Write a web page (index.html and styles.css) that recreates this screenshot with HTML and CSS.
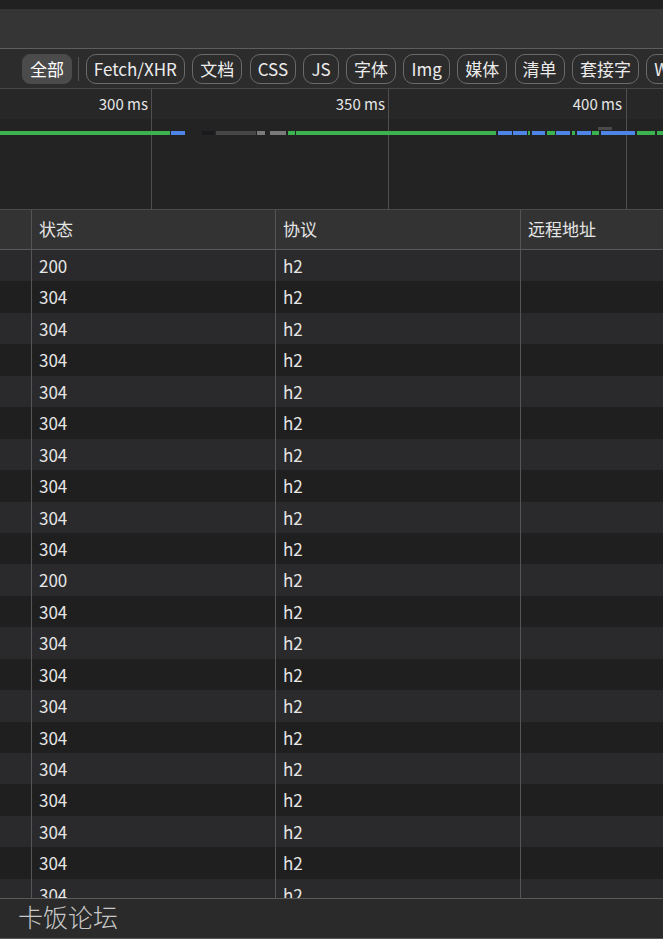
FILE: index.html
```html
<!DOCTYPE html>
<html lang="zh-CN">
<head>
    <meta charset="utf-8" />
    <title>网络</title>
    <link rel="stylesheet" href="styles.css">
</head>
<body>
    <div id="panel">
        <div class="topStrip"></div>
        <div class="toolStrip"></div>

        <!-- 类型过滤 -->
        <div class="filterBar">
            <span class="pill pillOn">全部</span>
            <span class="pillSep"></span>
            <span class="pill">Fetch/XHR</span>
            <span class="pill">文档</span>
            <span class="pill">CSS</span>
            <span class="pill">JS</span>
            <span class="pill">字体</span>
            <span class="pill">Img</span>
            <span class="pill">媒体</span>
            <span class="pill">清单</span>
            <span class="pill">套接字</span>
            <span class="pill">WebAssembly</span>
        </div>

        <!-- 时间轴 -->
        <div class="timeline">
            <div class="ruler"></div>
            <div class="gridLine" style="left: 151px"></div>
            <div class="gridLine" style="left: 388px"></div>
            <div class="gridLine" style="left: 626px"></div>
            <span class="tick" style="right: 515px">300 ms</span>
            <span class="tick" style="right: 278px">350 ms</span>
            <span class="tick" style="right: 41px">400 ms</span>
            <div id="bars"></div>
        </div>

        <div class="table">
            <div class="row head">
                <div class="cell"></div>
                <div class="cell">状态</div>
                <div class="cell">协议</div>
                <div class="cell">远程地址</div>
            </div>
            <div id="rows"></div>
        </div>

        <div class="footer">卡饭论坛</div>
    </div>

    <script type="text/javascript">
        // 时间轴上的分段 [起点, 终点, 类型]
        var segs = [
            [0, 170, "g"], [171, 185, "b"], [202, 214, "k"], [216, 256, "d"], [257, 265, "l"],
            [270, 286, "l"], [288, 295, "g"], [296, 496, "g"], [498, 512, "b"], [513, 527, "b"],
            [528, 530, "g"], [532, 545, "b"], [547, 555, "g"], [556, 570, "b"], [572, 575, "g"],
            [577, 591, "b"], [592, 599, "g"], [601, 635, "b"], [637, 655, "g"], [657, 663, "g"]
        ];
        var bars = document.getElementById("bars");
        segs.forEach(function (s) {
            var d = document.createElement("div");
            d.className = "seg seg_" + s[2];
            d.style.left = s[0] + "px";
            d.style.width = (s[1] - s[0]) + "px";
            bars.appendChild(d);
        });
        var tab = document.createElement("div");
        tab.className = "seg seg_t";
        tab.style.left = "598px";
        tab.style.width = "14px";
        bars.appendChild(tab);

        var codes = [200, 304, 304, 304, 304, 304, 304, 304, 304, 304, 200,
                     304, 304, 304, 304, 304, 304, 304, 304, 304, 304];
        var rows = document.getElementById("rows");
        codes.forEach(function (c) {
            var r = document.createElement("div");
            r.className = "row";
            r.innerHTML = '<div class="cell"></div><div class="cell">' + c +
                '</div><div class="cell">h2</div><div class="cell"></div>';
            rows.appendChild(r);
        });
    </script>
</body>
</html>
```

FILE: styles.css
```css
html, body {
    margin: 0;
    padding: 0;
    background-color: #202020;
}

body {
    width: 663px;
    height: 939px;
    overflow: hidden;
    font-family: "Noto Sans CJK SC", "Noto Sans", sans-serif;
    color: #e6e6e6;
}

#panel {
    display: flex;
    flex-direction: column;
    height: 939px;
}

.topStrip {
    height: 9px;
    background-color: #212121;
}

.toolStrip {
    height: 39px;
    background-color: #353535;
    border-bottom: 1px solid #5e5e5e;
}

.filterBar {
    height: 39px;
    display: flex;
    align-items: center;
    gap: 7.4px;
    padding-left: 22px;
    background-color: #2c2c2c;
    border-bottom: 1px solid #474747;
    white-space: nowrap;
    overflow: hidden;
}

.pill {
    flex: none;
    box-sizing: border-box;
    height: 30px;
    line-height: 28px;
    padding: 0 7px;
    border: 1px solid #6a6a6a;
    border-radius: 10px;
    font-size: 17px;
    color: #ececec;
}

.pillOn {
    background-color: #4b4b4b;
    border-color: #4b4b4b;
    border-radius: 8px;
    color: #ffffff;
}

.pillSep {
    flex: none;
    width: 1px;
    height: 24px;
    background-color: #555555;
    margin: 0 -1px;
}

.timeline {
    position: relative;
    height: 120px;
    background-color: #232323;
    overflow: hidden;
}

.ruler {
    height: 30px;
    background-color: #272727;
}

.gridLine {
    position: absolute;
    top: 0;
    bottom: 0;
    width: 1px;
    background-color: #4f4f4f;
}

.tick {
    position: absolute;
    top: 5px;
    font-size: 15px;
    line-height: 20px;
    color: #e6e6e6;
}

.seg {
    position: absolute;
    top: 42px;
    height: 4px;
}

.seg_g { background-color: #3bb14f; }
.seg_b { background-color: #4d84e6; }
.seg_k { background-color: #1b1b1f; }
.seg_d { background-color: #464646; }
.seg_l { background-color: #7a7a7a; }
.seg_t { top: 38px; height: 3px; background-color: #4a4a4a; }

.table {
    height: 688px;
    overflow: hidden;
    border-top: 1px solid #4a4a4a;
}

.row {
    display: grid;
    grid-template-columns: 31px 244px 245px 1fr;
    height: 31.45px;
    font-size: 17px;
}

.row .cell {
    padding-left: 7px;
    line-height: 31px;
    border-left: 1px solid #555555;
    white-space: nowrap;
    overflow: hidden;
}

.row .cell:first-child {
    border-left: none;
}

.head {
    height: 39px;
    background-color: #333333;
    border-bottom: 1px solid #5a5a5a;
}

.head .cell {
    line-height: 38px;
}

#rows .row:nth-child(odd) {
    background-color: #2a2a2c;
}

#rows .row:nth-child(even) {
    background-color: #1f1f1f;
}

.footer {
    flex: 1;
    border-top: 1px solid #5a5a5a;
    border-bottom: 1px solid #555555;
    background-color: #2a2a2a;
    padding-left: 18px;
    font-size: 25px;
    font-weight: 300;
    line-height: 34px;
    color: #c8c8c8;
}
```
